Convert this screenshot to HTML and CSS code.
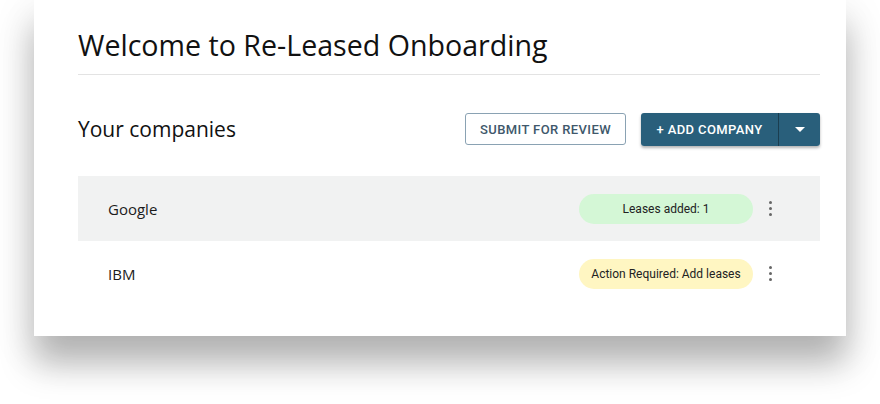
FILE: index.html
```html
<!DOCTYPE html>
<html>
<head>
<meta charset="utf-8">
<link rel="stylesheet" href="styles.css">
</head>
<body>
<div class="card">
  <h1 class="title">Welcome to Re-Leased Onboarding</h1>
  <div class="toolbar">
    <h2 class="subtitle">Your companies</h2>
    <div class="actions">
      <button class="btn-outline">SUBMIT FOR REVIEW</button>
      <div class="split">
        <button class="split-main">+ ADD COMPANY</button>
        <button class="split-arrow"><span class="caret"></span></button>
      </div>
    </div>
  </div>
  <div class="list">
    <div class="row row-alt">
      <span class="name">Google</span>
      <span class="badge badge-green">Leases added: 1</span>
      <span class="kebab"><i></i><i></i><i></i></span>
    </div>
    <div class="row">
      <span class="name">IBM</span>
      <span class="badge badge-yellow">Action Required: Add leases</span>
      <span class="kebab"><i></i><i></i><i></i></span>
    </div>
  </div>
</div>
</body>
</html>
```
FILE: styles.css
```css
html, body {
  margin: 0;
  padding: 0;
  background: #fff;
}
body {
  padding: 0 34px;
  height: 404px;
  overflow: hidden;
}
.card {
  background: #fff;
  width: 812px;
  box-sizing: border-box;
  padding: 26px 26px 30px 44px;
  box-shadow: 0 28px 32px rgba(0,0,0,0.26), 0 12px 40px 4px rgba(0,0,0,0.08);
  font-family: "Open Sans", "Noto Sans", sans-serif;
  color: #111;
}
.title {
  margin: 0;
  font-weight: 400;
  font-size: 28.6px;
  line-height: 38px;
  padding-bottom: 10px;
  border-bottom: 1px solid #e3e3e3;
}
.toolbar {
  display: flex;
  align-items: center;
  justify-content: space-between;
  margin-top: 37px;
  height: 34px;
}
.subtitle {
  margin: 0;
  font-weight: 400;
  font-size: 21px;
}
.actions {
  display: flex;
  align-items: center;
  gap: 15px;
}
button {
  font-family: Roboto, "Liberation Sans", sans-serif;
  font-weight: 500;
  font-size: 13px;
  letter-spacing: 0.4px;
  cursor: pointer;
}
.btn-outline {
  height: 32px;
  width: 161px;
  background: #fff;
  color: #40586b;
  border: 1px solid #8aa2b3;
  border-radius: 3px;
  padding: 0;
}
.split {
  display: flex;
  height: 33px;
  border-radius: 3px;
  box-shadow: 0 2px 3px rgba(0,0,0,0.3);
  overflow: hidden;
}
.split-main {
  width: 138px;
  background: #295f7b;
  color: #fff;
  border: 0;
  border-right: 1px solid #1b3e50;
  padding: 0;
}
.split-arrow {
  width: 41px;
  background: #295f7b;
  border: 0;
  padding: 0;
  display: flex;
  align-items: center;
  justify-content: center;
}
.caret {
  width: 0;
  height: 0;
  border-left: 5px solid transparent;
  border-right: 5px solid transparent;
  border-top: 5px solid #fff;
}
.list {
  margin-top: 30px;
}
.row {
  display: flex;
  align-items: center;
  height: 65px;
  padding: 0 47px 0 30px;
}
.row-alt {
  background: #f1f2f2;
}
.name {
  flex: 1;
  font-size: 15px;
  color: #1c1c1c;
}
.badge {
  width: 174px;
  height: 30px;
  border-radius: 15px;
  display: flex;
  align-items: center;
  justify-content: center;
  font-family: Roboto, "Liberation Sans", sans-serif;
  font-size: 12px;
  color: #222;
}
.badge-green { background: #d4f7d6; }
.badge-yellow { background: #fff6c2; }
.kebab {
  display: flex;
  flex-direction: column;
  gap: 3px;
  margin-left: 16px;
  width: 4px;
}
.kebab i {
  display: block;
  width: 3px;
  height: 3px;
  border-radius: 50%;
  background: #666;
}
```
